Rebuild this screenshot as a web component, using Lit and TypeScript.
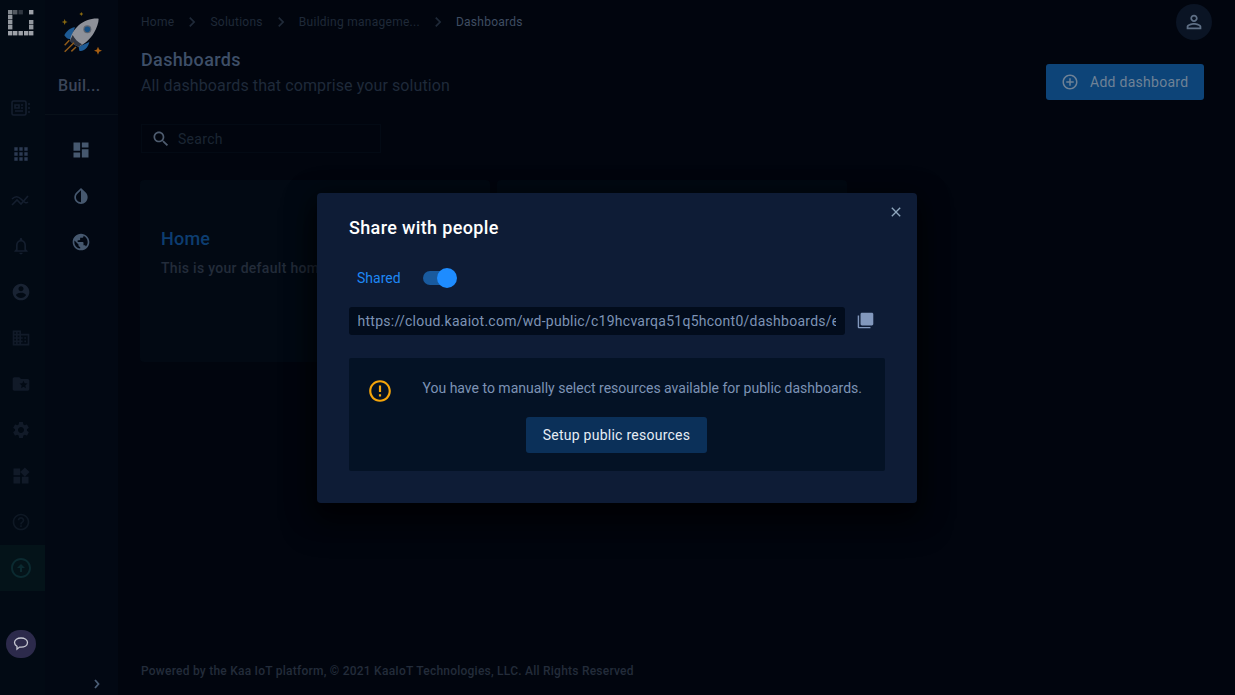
import { LitElement, html, css, svg } from "lit";
import { customElement } from "lit/decorators.js";

const P: Record<string, string> = {
  dashboard: "M3 13h8V3H3v10zm0 8h8v-6H3v6zm10 0h8V11h-8v10zm0-18v6h8V3h-8z",
  apps: "M4 8h4V4H4v4zm6 12h4v-4h-4v4zm-6 0h4v-4H4v4zm0-6h4v-4H4v4zm6 0h4v-4h-4v4zm6-10v4h4V4h-4zm-6 4h4V4h-4v4zm6 6h4v-4h-4v4zm0 6h4v-4h-4v4z",
  invert: "M17.66 7.93L12 2.27 6.34 7.93c-3.12 3.12-3.12 8.19 0 11.31C7.9 20.8 9.95 21.58 12 21.58c2.05 0 4.1-.78 5.66-2.34 3.12-3.12 3.12-8.19 0-11.31zM12 19.59c-1.6 0-3.11-.62-4.24-1.76C6.62 16.69 6 15.19 6 13.59s.62-3.11 1.76-4.24L12 5.1v14.49z",
  public: "M12 2C6.48 2 2 6.48 2 12s4.48 10 10 10 10-4.48 10-10S17.52 2 12 2zm-1 17.93c-3.95-.49-7-3.85-7-7.93 0-.62.08-1.21.21-1.79L9 15v1c0 1.1.9 2 2 2v1.93zm6.9-2.54c-.26-.81-1-1.39-1.9-1.39h-1v-3c0-.55-.45-1-1-1H8v-2h2c.55 0 1-.45 1-1V7h2c1.1 0 2-.9 2-2v-.41c2.93 1.19 5 4.06 5 7.41 0 2.08-.8 3.97-2.1 5.39z",
  bell: "M12 22c1.1 0 2-.9 2-2h-4c0 1.1.9 2 2 2zm6-6v-5c0-3.07-1.63-5.64-4.5-6.32V4c0-.83-.67-1.5-1.5-1.5s-1.5.67-1.5 1.5v.68C7.64 5.36 6 7.92 6 11v5l-2 2v1h16v-1l-2-2zm-2 1H8v-6c0-2.48 1.51-4.5 4-4.5s4 2.02 4 4.5v6z",
  account: "M12 2C6.48 2 2 6.48 2 12s4.48 10 10 10 10-4.48 10-10S17.52 2 12 2zm0 3c1.66 0 3 1.34 3 3s-1.34 3-3 3-3-1.34-3-3 1.34-3 3-3zm0 14.2c-2.5 0-4.71-1.28-6-3.22.03-1.99 4-3.08 6-3.08 1.99 0 5.97 1.09 6 3.08-1.29 1.94-3.5 3.22-6 3.22z",
  domain: "M12 7V3H2v18h20V7H12zM6 19H4v-2h2v2zm0-4H4v-2h2v2zm0-4H4V9h2v2zm0-4H4V5h2v2zm4 12H8v-2h2v2zm0-4H8v-2h2v2zm0-4H8V9h2v2zm0-4H8V5h2v2zm10 12h-8v-2h2v-2h-2v-2h2v-2h-2V9h8v10zm-2-8h-2v2h2v-2zm0 4h-2v2h2v-2z",
  folder: "M20 6h-8l-2-2H4c-1.1 0-1.99.9-1.99 2L2 18c0 1.1.9 2 2 2h16c1.1 0 2-.9 2-2V8c0-1.1-.9-2-2-2zm-2.06 11L15 15.28 12.06 17l.78-3.33-2.59-2.24 3.41-.29L15 8l1.34 3.14 3.41.29-2.59 2.24.78 3.33z",
  settings: "M19.14 12.94c.04-.3.06-.61.06-.94 0-.32-.02-.64-.07-.94l2.03-1.58c.18-.14.23-.41.12-.61l-1.92-3.32c-.12-.22-.37-.29-.59-.22l-2.39.96c-.5-.38-1.03-.7-1.62-.94l-.36-2.54c-.04-.24-.24-.41-.48-.41h-3.84c-.24 0-.43.17-.47.41l-.36 2.54c-.59.24-1.13.57-1.62.94l-2.39-.96c-.22-.08-.47 0-.59.22L2.74 8.87c-.12.21-.08.47.12.61l2.03 1.58c-.05.3-.09.63-.09.94s.02.64.07.94l-2.03 1.58c-.18.14-.23.41-.12.61l1.92 3.32c.12.22.37.29.59.22l2.39-.96c.5.38 1.03.7 1.62.94l.36 2.54c.05.24.24.41.48.41h3.84c.24 0 .44-.17.47-.41l.36-2.54c.59-.24 1.13-.56 1.62-.94l2.39.96c.22.08.47 0 .59-.22l1.92-3.32c.12-.22.07-.47-.12-.61l-2.01-1.58zM12 15.6c-1.98 0-3.6-1.62-3.6-3.6s1.62-3.6 3.6-3.6 3.6 1.62 3.6 3.6-1.62 3.6-3.6 3.6z",
  widgets: "M13 13v8h8v-8h-8zM3 21h8v-8H3v8zM3 3v8h8V3H3zm13.66-1.31L11 7.34 16.66 13l5.66-5.66-5.66-5.65z",
  help: "M11 18h2v-2h-2v2zm1-16C6.48 2 2 6.48 2 12s4.48 10 10 10 10-4.48 10-10S17.52 2 12 2zm0 18c-4.41 0-8-3.59-8-8s3.59-8 8-8 8 3.59 8 8-3.59 8-8 8zm0-14c-2.21 0-4 1.79-4 4h2c0-1.1.9-2 2-2s2 .9 2 2c0 2-3 1.75-3 5h2c0-2.25 3-2.5 3-5 0-2.21-1.79-4-4-4z",
  up: "M12 20c-4.41 0-8-3.59-8-8s3.59-8 8-8 8 3.59 8 8-3.59 8-8 8m0 2c5.52 0 10-4.48 10-10S17.52 2 12 2 2 6.48 2 12s4.48 10 10 10zm-1-10v4h2v-4h3l-4-4-4 4h3z",
  search: "M15.5 14h-.79l-.28-.27C15.41 12.59 16 11.11 16 9.5 16 5.91 13.09 3 9.5 3S3 5.91 3 9.5 5.91 16 9.5 16c1.61 0 3.09-.59 4.23-1.57l.27.28v.79l5 4.99L20.49 19l-4.99-5zm-6 0C7.01 14 5 11.99 5 9.5S7.01 5 9.5 5 14 7.01 14 9.5 11.99 14 9.5 14z",
  person: "M12 5.9c1.16 0 2.1.94 2.1 2.1s-.94 2.1-2.1 2.1S9.9 9.16 9.9 8s.94-2.1 2.1-2.1m0 9c2.97 0 6.1 1.46 6.1 2.1v1.1H5.9V17c0-.64 3.13-2.1 6.1-2.1M12 4C9.79 4 8 5.79 8 8s1.79 4 4 4 4-1.79 4-4-1.79-4-4-4zm0 9c-2.67 0-8 1.34-8 4v3h16v-3c0-2.66-5.33-4-8-4z",
  add: "M13 7h-2v4H7v2h4v4h2v-4h4v-2h-4V7zm-1-5C6.48 2 2 6.48 2 12s4.48 10 10 10 10-4.48 10-10S17.52 2 12 2zm0 18c-4.41 0-8-3.59-8-8s3.59-8 8-8 8 3.59 8 8-3.59 8-8 8z",
  close: "M19 6.41L17.59 5 12 10.59 6.41 5 5 6.41 10.59 12 5 17.59 6.41 19 12 13.41 17.59 19 19 17.59 13.41 12z",
  chevron: "M10 6L8.59 7.41 13.17 12l-4.58 4.59L10 18l6-6z",
  copy: "M3 5H1v16c0 1.1.9 2 2 2h16v-2H3V5zm18-4H7c-1.1 0-2 .9-2 2v14c0 1.1.9 2 2 2h14c1.1 0 2-.9 2-2V3c0-1.1-.9-2-2-2z",
  error: "M11 15h2v2h-2zm0-8h2v6h-2zm.99-5C6.47 2 2 6.48 2 12s4.47 10 9.99 10C17.52 22 22 17.52 22 12S17.52 2 11.99 2zM12 20c-4.42 0-8-3.58-8-8s3.58-8 8-8 8 3.58 8 8-3.58 8-8 8z",
};

const icon = (name: string, size = 24) => html`<svg class="ic" width=${size} height=${size} viewBox="0 0 24 24" fill="currentColor"><path d=${P[name]}></path></svg>`;

const logoCells: [number, number, number][] = [
  [8, 10, 0.7], [13, 10, 0.45], [18.5, 10, 0.25], [29, 10, 0.85],
  [8, 15, 0.8], [8, 20, 0.8], [29, 20, 0.8], [8, 25, 0.8], [29, 25, 0.8],
  [8, 31, 0.85], [13, 31, 0.85], [18.5, 31, 0.85], [24, 31, 0.85], [29, 31, 0.85],
];

const railIcons = ["card", "apps", "trend", "bell", "account", "domain", "folder", "settings", "widgets", "help"];
const railColors: Record<string, string> = {
  card: "#141e2e", apps: "#2c3a52", trend: "#141e2e", bell: "#141e2e", account: "#192333",
  domain: "#111a28", folder: "#111a28", settings: "#111a28", widgets: "#111a28", help: "#0e1824",
};

@customElement("app-root")
export class AppRoot extends LitElement {
  static styles = css`
    :host { display: block; width: 100%; height: 695px; position: relative; overflow: hidden; background: #01050e;
      font-family: Roboto, "Liberation Sans", sans-serif; }
    .ic { display: block; flex: none; }
    .page { display: flex; height: 695px; }
    .rail { width: 45px; flex: none; background: #020a14; display: flex; flex-direction: column; align-items: stretch; position: relative; }
    .logo { height: 85px; flex: none; }
    .logo svg { display: block; }
    .rail-item { height: 46px; display: flex; align-items: center; justify-content: center; padding-right: 4px; }
    .rail-item.active { background: #041319; color: #0b2a30; }
    .chat-wrap { margin-top: auto; padding: 0 0 37px 6px; }
    .chat { width: 30px; height: 28px; border-radius: 14px; background: #2c2a4b; display: flex; align-items: center; justify-content: center; color: #c6c8d2; }
    .side { width: 73px; flex: none; background: #020813; display: flex; flex-direction: column; align-items: center; position: relative; }
    .rocket { margin-top: 10px; height: 45px; align-self: flex-start; padding-left: 13px; }
    .rocket svg { display: block; }
    .sol-name { font-size: 16px; font-weight: 500; color: #3b4558; margin-top: 21px; line-height: 19px; align-self: flex-start; padding-left: 13px; letter-spacing: .3px; }
    .divider { height: 1px; background: #081019; align-self: stretch; margin-top: 19px; }
    .side-items { display: flex; flex-direction: column; margin-top: 12px; }
    .side-item { height: 46px; width: 73px; box-sizing: border-box; display: flex; align-items: center; justify-content: center; color: #46586f; padding-right: 2px; }
    .expand { margin-top: auto; align-self: flex-end; padding: 0 17px 6px 0; color: #4a5d75; }
    .main { flex: 1; min-width: 0; padding: 0 31px 0 23px; display: flex; flex-direction: column; position: relative; }
    .topbar { height: 44px; display: flex; align-items: center; justify-content: space-between; flex: none; }
    .crumbs { display: flex; align-items: center; font-size: 12px; letter-spacing: .27px; color: #1f2938; }
    .crumbs .sep { color: #1f2938; margin: 0 8px; }
    .crumbs .cur { color: #3f4d62; }
    .avatar { width: 36px; height: 36px; border-radius: 50%; background: #0a1424; color: #5e6f85; display: flex; align-items: center; justify-content: center; margin-right: -8px; }
    .head { display: flex; justify-content: space-between; align-items: flex-start; flex: none; }
    .title { font-size: 18px; font-weight: 500; color: #3e4f68; line-height: 22px; margin-top: 5px; letter-spacing: .35px; }
    .sub { font-size: 16px; color: #1f2a3a; line-height: 20px; margin-top: 5px; letter-spacing: .1px; }
    .add { height: 36px; width: 158px; box-sizing: border-box; margin-top: 20px; background: #0d4478; color: #6f8296; border-radius: 3px; display: flex; align-items: center; padding-left: 15px; gap: 11px; font-size: 14px; letter-spacing: .27px; }
    .search { width: 240px; height: 29px; box-sizing: border-box; margin-top: 24px; border: 1px solid #030a14; display: flex; align-items: center; padding-left: 9px; gap: 7px; color: #4e5c6f; font-size: 14px; flex: none; letter-spacing: .3px; }
    .search span { color: #1b2533; }
    .cards { display: flex; gap: 7px; margin-top: 27px; margin-left: -1px; flex: none; }
    .card { width: 350px; height: 182px; box-sizing: border-box; background: #020913; border-radius: 4px; padding: 48px 21px 0; }
    .card h3 { margin: 0; font-size: 18px; font-weight: 500; color: #0d3d70; line-height: 22px; letter-spacing: .2px; }
    .card p { margin: 8px 0 0; font-size: 14px; font-weight: 500; color: #232c3a; line-height: 20px; white-space: nowrap; letter-spacing: .3px; }
    .foot { margin-top: auto; padding-bottom: 17px; font-size: 12px; font-weight: 500; color: #232c3a; line-height: 14px; letter-spacing: .235px; }
    .overlay { position: absolute; inset: 0; display: flex; align-items: center; justify-content: center; padding-right: 1px; }
    .modal { width: 600px; height: 310px; box-sizing: border-box; padding: 24px 32px 32px; background: #0e1c36; border-radius: 4px; position: relative;
      box-shadow: 0 16px 30px 4px rgba(0,0,0,.55), 0 6px 26px 6px rgba(0,0,0,.4); display: flex; flex-direction: column; }
    .x { position: absolute; top: 11px; right: 13px; color: #8ea6bd; }
    .m-title { font-size: 18px; font-weight: 500; color: #fff; line-height: 22px; letter-spacing: .36px; }
    .shared { display: flex; align-items: center; margin-top: 25px; height: 28px; padding-left: 8px; color: #1e88f5; font-size: 14px; }
    .toggle { margin-left: 22px; width: 34px; height: 20px; position: relative; }
    .toggle i { position: absolute; left: 0; top: 3px; width: 28px; height: 14px; border-radius: 7px; background: #195a9e; }
    .toggle b { position: absolute; right: 0; top: 0; width: 20px; height: 20px; border-radius: 50%; background: #1e8cff; }
    .link { display: flex; align-items: center; gap: 12px; margin-top: 15px; }
    .url { width: 496px; height: 28px; box-sizing: border-box; background: #020c1c; border-radius: 3px; padding: 0 9px 0 8.5px; color: #7d93b5; font-size: 14px; line-height: 28px; letter-spacing: .26px; }
    .url span { display: block; overflow: hidden; white-space: nowrap; }
    .copy { color: #8298bd; }
    .box { margin-top: 23px; height: 113px; background: #041225; border-radius: 2px; position: relative; display: flex; flex-direction: column; align-items: center; }
    .warn { position: absolute; left: 18px; top: 20px; color: #f5a50a; }
    .box p { margin: 20px 0 0 73.5px; align-self: flex-start; font-size: 14px; line-height: 20px; color: #7d93b5; }
    .setup { margin: 19px 1px 0 0; width: 181px; height: 36px; background: #0b3059; color: #e6edf5; border-radius: 3px; font-size: 14px; display: flex; align-items: center; justify-content: center; letter-spacing: .25px; }
  `;

  private railIcon(name: string) {
    if (name === "card") {
      return html`<svg class="ic" width="20" height="20" viewBox="0 0 20 20" fill="none" stroke="currentColor" stroke-width="1.6"><rect x="1" y="3" width="14" height="14" rx="1.5"></rect><path d="M4 7h4v3H4zM4 13h8M10 7h2M10 10h2M17 6h2M17 10h2M17 14h2"></path></svg>`;
    }
    if (name === "trend") {
      return html`<svg class="ic" width="20" height="20" viewBox="0 0 20 20" fill="none" stroke="currentColor" stroke-width="1.6"><path d="M1 9c3-3 6-3 9 0s5 5 7 3"></path><path d="M1 15l5-5 4 4 7-8"></path></svg>`;
    }
    return icon(name, 20);
  }

  render() {
    return html`
      <div class="page">
        <nav class="rail">
          <div class="logo">
            <svg width="45" height="85">${logoCells.map(([x, y, o]) => svg`<rect x=${x} y=${y} width="4.4" height="4.4" fill="#b8bcc2" opacity=${o}></rect>`)}</svg>
          </div>
          ${railIcons.map((n) => html`<div class="rail-item" style="color:${railColors[n]}">${this.railIcon(n)}</div>`)}
          <div class="rail-item active">${icon("up", 24)}</div>
          <div class="chat-wrap"><div class="chat">
            <svg width="16" height="16" viewBox="0 0 16 16" fill="none" stroke="currentColor" stroke-width="1.3"><path d="M8 2c3.600 0 6.500 1.900 6.500 4.600S11.600 11.200 8 11.200c-.6 0-1 0-1.500-.1L4 13.200v-2.900C2.400 9.500 1.500 8.200 1.500 6.600 1.500 3.900 4.400 2 8 2z"></path></svg>
          </div></div>
        </nav>
        <aside class="side">
          <div class="rocket">
            <svg width="45" height="45" viewBox="174 30 135 135">
              <path d="M244 36l2 4 4 2-4 2-2 4-2-4-4-2 4-2z" fill="#8a6a10"></path>
              <path d="M194 57l2.500 6.500L203 66l-6.500 2.500L194 75l-2.500-6.500L185 66l6.500-2.500z" fill="#8a6a10"></path>
              <path d="M294 140l3.500 8.500L306 152l-8.500 3.500L294 164l-3.500-8.500L282 152l8.500-3.500z" fill="#a85f12"></path>
              <path d="M193 106c6-12 16-22 32-24l-12 34c-6 2-12 2-20-10z" fill="#1d5a94"></path>
              <path d="M238 152c10 4 26-6 30-26l-32 14z" fill="#1d5a94"></path>
              <path d="M296 56c-20-2-44 6-60 20-14 13-24 30-26 46 8 8 16 14 26 18 18-8 36-24 46-42 8-14 14-30 14-42z" fill="#8e9199"></path>
              <path d="M210 122c8 8 16 14 26 18l10-7c-12-6-22-16-28-28z" fill="#2f3440"></path>
              <circle cx="262" cy="88" r="12" fill="#5f6570"></circle>
              <circle cx="262" cy="88" r="8.500" fill="#154f84"></circle>
              <path d="M194 136l14-15M194 155l28-27M214 154l14-13" stroke="#8f5a1a" stroke-width="4.500" fill="none"></path>
            </svg>
          </div>
          <div class="sol-name">Buil...</div>
          <div class="divider"></div>
          <div class="side-items">
            <div class="side-item">${icon("dashboard", 20)}</div>
            <div class="side-item">${icon("invert", 20)}</div>
            <div class="side-item">${icon("public", 20)}</div>
          </div>
          <div class="expand"><svg class="ic" width="8" height="10" viewBox="0 0 8 10" fill="none" stroke="currentColor" stroke-width="1.800"><path d="M2 1l3.500 4L2 9"></path></svg></div>
        </aside>
        <main class="main">
          <div class="topbar">
            <div class="crumbs">
              <span>Home</span><span class="sep">${icon("chevron", 20)}</span>
              <span>Solutions</span><span class="sep">${icon("chevron", 20)}</span>
              <span>Building manageme...</span><span class="sep">${icon("chevron", 20)}</span>
              <span class="cur">Dashboards</span>
            </div>
            <div class="avatar">${icon("person", 22)}</div>
          </div>
          <div class="head">
            <div>
              <div class="title">Dashboards</div>
              <div class="sub">All dashboards that comprise your solution</div>
            </div>
            <div class="add">${icon("add", 18)}<span>Add dashboard</span></div>
          </div>
          <div class="search">${icon("search", 20)}<span>Search</span></div>
          <div class="cards">
            <div class="card"><h3>Home</h3><p>This is your default home dashboard</p></div>
            <div class="card"></div>
          </div>
          <div class="foot">Powered by the Kaa IoT platform, © 2021 KaaIoT Technologies, LLC. All Rights Reserved</div>
        </main>
      </div>
      <div class="overlay">
        <div class="modal">
          <div class="x">${icon("close", 16)}</div>
          <div class="m-title">Share with people</div>
          <div class="shared"><span>Shared</span><div class="toggle"><i></i><b></b></div></div>
          <div class="link">
            <div class="url"><span>https://cloud.kaaiot.com/wd-public/c19hcvarqa51q5hcont0/dashboards/edit</span></div>
            <div class="copy">${icon("copy", 17)}</div>
          </div>
          <div class="box">
            <div class="warn">${icon("error", 26)}</div>
            <p>You have to manually select resources available for public dashboards.</p>
            <div class="setup">Setup public resources</div>
          </div>
        </div>
      </div>
    `;
  }
}
